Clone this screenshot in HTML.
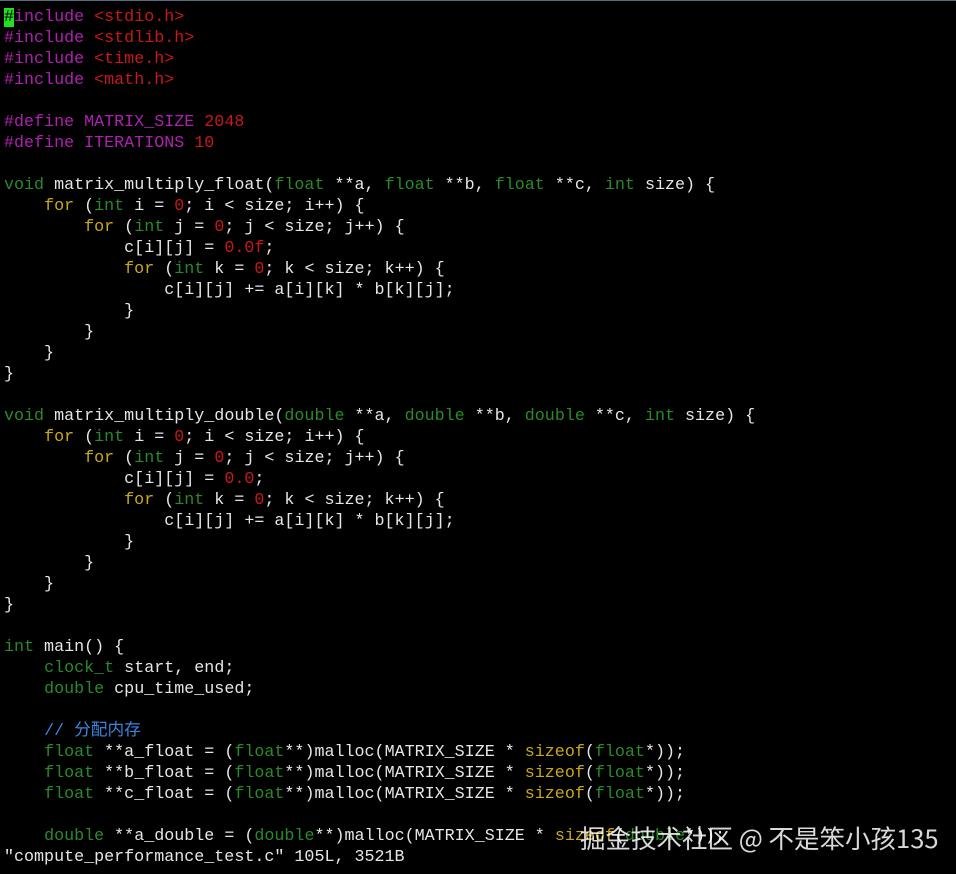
<!DOCTYPE html>
<html><head><meta charset="utf-8"><style>
html,body{margin:0;padding:0;background:#000;width:956px;height:874px;overflow:hidden}
body{border-top:1px solid #5a6a80;box-sizing:border-box}
pre{margin:0;position:absolute;left:4px;top:7px;font-family:"Liberation Mono","Noto Sans CJK SC",monospace;font-size:16.7px;line-height:21px;color:#e6e6e6;white-space:pre}
.p{color:#b020b0}.s{color:#c81818}.t{color:#2a8a2a}.n{color:#c81818}.c{color:#3a86e0}.y{color:#c8a818}
.cur{background:#20e020;color:#000}
.wm{position:absolute;left:580px;top:819px;font-family:"Noto Sans CJK SC",sans-serif;font-size:25.5px;color:rgba(255,255,255,0.85)}
</style></head><body>
<pre><span class="cur">#</span><span class="p">include</span> <span class="s">&lt;stdio.h&gt;</span>
<span class="p">#include</span> <span class="s">&lt;stdlib.h&gt;</span>
<span class="p">#include</span> <span class="s">&lt;time.h&gt;</span>
<span class="p">#include</span> <span class="s">&lt;math.h&gt;</span>

<span class="p">#define MATRIX_SIZE</span> <span class="n">2048</span>
<span class="p">#define ITERATIONS</span> <span class="n">10</span>

<span class="t">void</span> matrix_multiply_float(<span class="t">float</span> **a, <span class="t">float</span> **b, <span class="t">float</span> **c, <span class="t">int</span> size) {
    <span class="y">for</span> (<span class="t">int</span> i = <span class="n">0</span>; i &lt; size; i++) {
        <span class="y">for</span> (<span class="t">int</span> j = <span class="n">0</span>; j &lt; size; j++) {
            c[i][j] = <span class="n">0.0f</span>;
            <span class="y">for</span> (<span class="t">int</span> k = <span class="n">0</span>; k &lt; size; k++) {
                c[i][j] += a[i][k] * b[k][j];
            }
        }
    }
}

<span class="t">void</span> matrix_multiply_double(<span class="t">double</span> **a, <span class="t">double</span> **b, <span class="t">double</span> **c, <span class="t">int</span> size) {
    <span class="y">for</span> (<span class="t">int</span> i = <span class="n">0</span>; i &lt; size; i++) {
        <span class="y">for</span> (<span class="t">int</span> j = <span class="n">0</span>; j &lt; size; j++) {
            c[i][j] = <span class="n">0.0</span>;
            <span class="y">for</span> (<span class="t">int</span> k = <span class="n">0</span>; k &lt; size; k++) {
                c[i][j] += a[i][k] * b[k][j];
            }
        }
    }
}

<span class="t">int</span> main() {
    <span class="t">clock_t</span> start, end;
    <span class="t">double</span> cpu_time_used;

    <span class="c">// 分配内存</span>
    <span class="t">float</span> **a_float = (<span class="t">float</span>**)malloc(MATRIX_SIZE * <span class="y">sizeof</span>(<span class="t">float</span>*));
    <span class="t">float</span> **b_float = (<span class="t">float</span>**)malloc(MATRIX_SIZE * <span class="y">sizeof</span>(<span class="t">float</span>*));
    <span class="t">float</span> **c_float = (<span class="t">float</span>**)malloc(MATRIX_SIZE * <span class="y">sizeof</span>(<span class="t">float</span>*));

    <span class="t">double</span> **a_double = (<span class="t">double</span>**)malloc(MATRIX_SIZE * <span class="y">sizeof</span>(<span class="t">double</span>*));
"compute_performance_test.c" 105L, 3521B</pre>
<div class="wm">掘金技术社区 @ 不是笨小孩135</div>
</body></html>
